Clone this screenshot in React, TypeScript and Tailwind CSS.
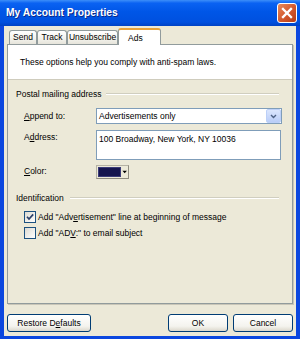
import React from "react";

function Tab({ label, w, selected }: { label: string; w: string; selected?: boolean }) {
  if (selected) {
    return (
      <div
        className={`${w} h-[17px] -mb-[1px] bg-white border-x border-[#919b9c] border-t-2 border-t-[#e8a33a] rounded-t-[3px] flex items-center pl-[9px]`}
      >
        <span className="pt-[1px]">{label}</span>
      </div>
    );
  }
  return (
    <div
      className={`${w} h-[14px] border-x border-t border-[#919b9c] rounded-t-[3px] bg-[linear-gradient(to_bottom,#ffffff,#f3f2ec_60%,#e6e4da)] flex items-center justify-center`}
    >
      <span>{label}</span>
    </div>
  );
}

function Etched() {
  return <div className="flex-1 h-[2px] border-t border-[#d0cebf] border-b border-b-white" />;
}

function Check({ checked }: { checked?: boolean }) {
  return (
    <div className="w-[12px] h-[12px] border border-[#1c5180] bg-[linear-gradient(135deg,#dcdad2,#ffffff)] flex items-center justify-center">
      {checked && (
        <svg width="10" height="10" viewBox="0 0 10 10">
          <path d="M2 4.8 L4 7 L8.2 2.4" fill="none" stroke="#2a3f6a" strokeWidth="1.7" />
        </svg>
      )}
    </div>
  );
}

function Btn({ w, children }: { w: string; children: React.ReactNode }) {
  return (
    <div
      className={`${w} h-[18px] rounded-[3px] border border-[#003c74] bg-[linear-gradient(to_bottom,#ffffff,#f4f3ee_70%,#dcd8cc)] flex items-center justify-center`}
    >
      {children}
    </div>
  );
}

export default function App() {
  return (
    <div className="w-[300px] h-[339px] bg-[#0b47df] flex flex-col font-['Liberation_Sans',Arial,sans-serif] text-[8.5px] leading-none text-black">
      {/* Title bar */}
      <div className="h-[26px] shrink-0 flex items-center pl-[6px] pr-[3px] bg-[linear-gradient(to_bottom,#3d8ff9_0%,#0a62f2_12%,#0056e7_45%,#0050df_85%,#0042c4_100%)]">
        <span className="text-white font-bold text-[10.3px] [text-shadow:1px_1px_0_#0b2a8a]">
          My Account Properties
        </span>
        <div className="ml-auto w-[20px] h-[20px] rounded-[3px] border border-white bg-[linear-gradient(135deg,#e88a5c,#d2572c_55%,#b63d16)] flex items-center justify-center">
          <svg width="12" height="12" viewBox="0 0 12 12">
            <path d="M2 2 L10 10 M10 2 L2 10" stroke="white" strokeWidth="2.3" strokeLinecap="square" />
          </svg>
        </div>
      </div>

      {/* Body */}
      <div className="flex-1 mx-[4px] mb-[3px] bg-[#ece9d8] flex flex-col px-[3px] pt-[2px] pb-[4px]">
        {/* Tabs */}
        <div className="h-[16px] shrink-0 flex items-end pl-[2px] relative z-10">
          <Tab label="Send" w="w-[28px]" />
          <Tab label="Track" w="w-[30px]" />
          <Tab label="Unsubscribe" w="w-[51px]" />
          <Tab label="Ads" w="w-[43px]" selected />
        </div>

        {/* Panel */}
        <div className="h-[260px] shrink-0 border border-[#919b9c] shadow-[1px_1px_0_#c9c6b8] bg-[#ece9d8] flex flex-col">
          <div className="h-[35px] shrink-0 bg-white border-b border-[#cfccbd] flex items-center pl-[12px] pt-[1px]">
            These options help you comply with anti-spam laws.
          </div>

          {/* Postal mailing address */}
          <div className="mt-[8px] h-[12px] flex items-center pl-[8px] pr-[13px] gap-[4px]">
            <span>Postal mailing address</span>
            <Etched />
          </div>

          <div className="mt-[8px] h-[16px] flex items-center pl-[16px]">
            <span className="w-[72px]">
              <span className="underline">A</span>ppend to:
            </span>
            <div className="w-[186px] h-[16px] border border-[#7f9db9] bg-white flex items-center">
              <span className="pl-[2px] flex-1">Advertisements only</span>
              <div className="w-[15px] h-[14px] rounded-[2px] border border-[#bcd0f8] bg-[linear-gradient(to_bottom,#dbe6fe,#b9cdf8)] flex items-center justify-center">
                <svg width="7" height="5" viewBox="0 0 7 5">
                  <path d="M1 1 L3.5 3.5 L6 1" fill="none" stroke="#4d6185" strokeWidth="1.4" />
                </svg>
              </div>
            </div>
          </div>

          <div className="mt-[6px] flex items-start pl-[16px]">
            <span className="w-[72px] pt-[3px]">
              A<span className="underline">d</span>dress:
            </span>
            <div className="w-[185px] h-[30px] border border-[#7f9db9] bg-white pl-[2px] pt-[4px]">
              100 Broadway, New York, NY 10036
            </div>
          </div>

          <div className="mt-[4px] h-[15px] flex items-center pl-[16px]">
            <span className="w-[72px]">
              <span className="underline">C</span>olor:
            </span>
            <div className="w-[33px] h-[14px] border border-[#b5b2a4] border-r-[#8f8c80] border-b-[#8f8c80] bg-[#ece9d8] flex items-center p-[1px]">
              <div className="w-[25px] h-full bg-[#15154f] border border-[#3a3a78]" />
              <svg width="6" height="4" viewBox="0 0 6 4" className="ml-[1px]">
                <path d="M0.5 0.5 L5.5 0.5 L3 3.5 Z" fill="#000" />
              </svg>
            </div>
          </div>

          {/* Identification */}
          <div className="mt-[13px] h-[12px] flex items-center pl-[8px] pr-[13px] gap-[6px]">
            <span>Identification</span>
            <Etched />
          </div>

          <div className="mt-[7px] h-[12px] flex items-center pl-[16px] gap-[2px]">
            <Check checked />
            <span>
              Add "Adv<span className="underline">e</span>rtisement" line at beginning of message
            </span>
          </div>
          <div className="mt-[4px] h-[12px] flex items-center pl-[16px] gap-[2px]">
            <Check />
            <span>
              Add "AD<span className="underline">V</span>:" to email subject
            </span>
          </div>
        </div>

        {/* Buttons */}
        <div className="mt-[10px] h-[18px] shrink-0 flex">
          <Btn w="w-[84px]">
            <span>
              Restore D<span className="underline">e</span>faults
            </span>
          </Btn>
          <div className="flex-1" />
          <Btn w="w-[60px]">OK</Btn>
          <div className="w-[5px]" />
          <Btn w="w-[60px]">Cancel</Btn>
        </div>
      </div>
    </div>
  );
}
